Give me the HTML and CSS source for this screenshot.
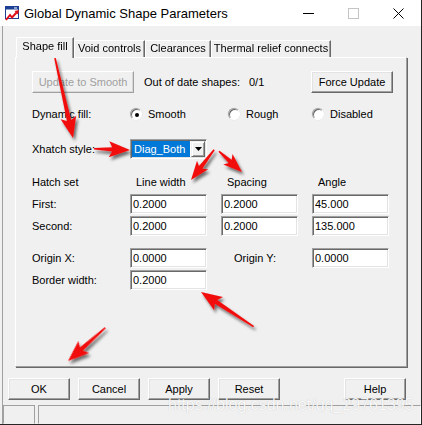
FILE: index.html
```html
<!DOCTYPE html>
<html>
<head>
<meta charset="utf-8">
<title>Global Dynamic Shape Parameters</title>
<link rel="stylesheet" href="styles.css">
</head>
<body>
<div class="window">
  <div class="titlebar">
    <svg class="app-icon" viewBox="0 0 16 16" width="16" height="16">
      <rect x="1.5" y="1.5" width="13" height="12" fill="#fff" stroke="#1c3f94"/>
      <rect x="1.5" y="1.5" width="13" height="3" fill="#1c3f94"/>
      <rect x="10" y="2.5" width="3" height="1" fill="#fff"/>
      <polyline points="2,15 6,10 8,12.5 13,7" fill="none" stroke="#e0101a" stroke-width="2"/>
      <polygon points="10.5,6 15,5 14,9.5" fill="#e0101a"/>
    </svg>
    <span class="title">Global Dynamic Shape Parameters</span>
    <div class="caption-btns">
      <span class="cap"><svg width="11" height="11" viewBox="0 0 11 11"><rect x="0" y="5" width="11" height="1" fill="#000"/></svg></span>
      <span class="cap"><svg width="11" height="11" viewBox="0 0 11 11"><rect x="0.5" y="0.5" width="10" height="10" fill="none" stroke="#c4c4c4"/></svg></span>
      <span class="cap"><svg width="11" height="11" viewBox="0 0 11 11"><path d="M0.5 0.5 L10.5 10.5 M10.5 0.5 L0.5 10.5" stroke="#000" stroke-width="1"/></svg></span>
    </div>
  </div>

  <div class="client">
    <div class="tabs">
      <div class="tab active w1">Shape fill</div>
      <div class="tab w2">Void controls</div>
      <div class="tab w3">Clearances</div>
      <div class="tab w4">Thermal relief connects</div>
    </div>

    <div class="panel">
      <div class="row r1">
        <button class="btn disabled w-update">Update to Smooth</button>
        <span class="ood">Out of date shapes:</span>
        <span class="count">0/1</span>
        <button class="btn w-force">Force Update</button>
      </div>

      <div class="row r2">
        <span class="label">Dynamic fill:</span>
        <span class="opt o1"><span class="radio checked"></span><span class="opt-text">Smooth</span></span>
        <span class="opt o2"><span class="radio"></span><span class="opt-text">Rough</span></span>
        <span class="opt o3"><span class="radio"></span><span class="opt-text">Disabled</span></span>
      </div>

      <div class="row r3">
        <span class="label">Xhatch style:</span>
        <div class="combo">
          <span class="combo-sel">Diag_Both</span>
          <span class="combo-btn"><svg width="7" height="4" viewBox="0 0 7 4"><polygon points="0,0 7,0 3.5,4" fill="#000"/></svg></span>
        </div>
      </div>

      <div class="row r4">
        <span class="label">Hatch set</span>
        <span class="head">Line width</span>
        <span class="gap"></span>
        <span class="head">Spacing</span>
        <span class="gap"></span>
        <span class="head">Angle</span>
      </div>

      <div class="row r5">
        <span class="label">First:</span>
        <input class="field" type="text" value="0.2000" readonly>
        <span class="gap"></span>
        <input class="field" type="text" value="0.2000" readonly>
        <span class="gap"></span>
        <input class="field" type="text" value="45.000" readonly>
      </div>

      <div class="row r6">
        <span class="label">Second:</span>
        <input class="field" type="text" value="0.2000" readonly>
        <span class="gap"></span>
        <input class="field" type="text" value="0.2000" readonly>
        <span class="gap"></span>
        <input class="field" type="text" value="135.000" readonly>
      </div>

      <div class="row r7">
        <span class="label">Origin X:</span>
        <input class="field" type="text" value="0.0000" readonly>
        <span class="gap"></span>
        <span class="oy">Origin Y:</span>
        <span class="gap"></span>
        <input class="field" type="text" value="0.0000" readonly>
      </div>

      <div class="row r8">
        <span class="label">Border width:</span>
        <input class="field" type="text" value="0.2000" readonly>
      </div>
    </div>

    <div class="btnrow">
      <button class="btn">OK</button>
      <button class="btn">Cancel</button>
      <button class="btn">Apply</button>
      <button class="btn">Reset</button>
      <button class="btn help">Help</button>
    </div>

    <div class="statusbar">
      <div class="cell c1"></div>
      <div class="cell c2"></div>
    </div>
  </div>
</div>

<div class="watermark">https://blog.csdn.net/qq_29761395</div>

<svg class="annotations" width="422" height="425" viewBox="0 0 422 425">
  <defs>
    <filter id="sh" x="-50%" y="-50%" width="200%" height="200%">
      <feDropShadow dx="2" dy="3" stdDeviation="1.8" flood-color="#000" flood-opacity="0.55"/>
    </filter>
  </defs>
  <g fill="#f20d0d" filter="url(#sh)">
    <g transform="translate(73 138) rotate(77.3)"><path d="M-82 -0.8 L-18 -2.2 L-21 -8 L0 0 L-21 8 L-18 2.2 L-82 0.8 Z"/></g>
    <g transform="translate(130 150) rotate(2)"><path d="M-36 -0.8 L-18 -2.2 L-21 -8 L0 0 L-21 8 L-18 2.2 L-36 0.8 Z"/></g>
    <g transform="translate(191 180) rotate(127.5)"><path d="M-38 -0.8 L-16 -2.2 L-19 -7 L0 0 L-19 7 L-16 2.2 L-38 0.8 Z"/></g>
    <g transform="translate(242 172) rotate(42)"><path d="M-31 -0.8 L-16 -2.2 L-19 -7 L0 0 L-19 7 L-16 2.2 L-31 0.8 Z"/></g>
    <g transform="translate(201 292) rotate(-146.6)"><path d="M-63 -0.8 L-18 -2.2 L-21 -8 L0 0 L-21 8 L-18 2.2 L-63 0.8 Z"/></g>
    <g transform="translate(68 361) rotate(138.3)"><path d="M-50 -0.8 L-18 -2.2 L-21 -8 L0 0 L-21 8 L-18 2.2 L-50 0.8 Z"/></g>
  </g>
</svg>
</body>
</html>
```

FILE: styles.css
```css
* { box-sizing: border-box; }

html, body { margin: 0; padding: 0; }

body {
  width: 422px;
  height: 425px;
  background: #262626;
  font-family: "Liberation Sans", Arial, sans-serif;
  font-size: 11px;
  color: #000;
  overflow: hidden;
  position: relative;
}

.window {
  width: 421px;
  height: 424px;
  background: #f0f0f0;
  display: flex;
  flex-direction: column;
}

/* Title bar */
.titlebar {
  height: 26px;
  flex-shrink: 0;
  background: #fff;
  display: flex;
  align-items: center;
}
.app-icon { margin-left: 4px; margin-right: 4px; flex-shrink: 0; }
.title { font-size: 13px; color: #000; }
.caption-btns { margin-left: auto; display: flex; }
.cap {
  width: 45px;
  height: 26px;
  display: flex;
  align-items: center;
  justify-content: center;
}

/* Client area */
.client {
  flex: 1;
  margin-left: 2px;
  border-left: 1px solid #a0a0a0;
  display: flex;
  flex-direction: column;
}

.tabs {
  display: flex;
  align-items: flex-end;
  height: 20px;
  margin: 11px 0 0 13px;
  position: relative;
  z-index: 1;
}
.tab {
  height: 17px;
  border: 1px solid #fff;
  border-right-color: #696969;
  border-bottom: 0;
  box-shadow: inset -1px 0 0 #a0a0a0;
  line-height: 14px;
  text-align: center;
  white-space: nowrap;
}
.tab.active {
  height: 21px;
  margin-bottom: -1px;
  background: #f0f0f0;
  padding-top: 1px;
}
.w1 { width: 58px; }
.w2 { width: 71px; }
.w3 { width: 66px; }
.w4 { width: 120px; }

.panel {
  margin-left: 12px;
  width: 392px;
  height: 310px;
  flex-shrink: 0;
  border: 1px solid;
  border-color: #fff #a0a0a0 #a0a0a0 #fff;
  box-shadow: 1px 1px 0 #696969;
  padding: 13px 0 0 16px;
}

.row { display: flex; align-items: center; }
.r1 { height: 22px; }
.r2 { height: 20px; margin-top: 11px; }
.r3 { height: 20px; margin-top: 15px; }
.r4 { height: 18px; margin-top: 14px; }
.r5 { height: 20px; margin-top: 3px; }
.r6 { height: 20px; margin-top: 2px; }
.r7 { height: 20px; margin-top: 12px; }
.r8 { height: 20px; margin-top: 2px; }

.label { width: 98px; flex-shrink: 0; white-space: nowrap; }
.gap { width: 14px; flex-shrink: 0; }
.head { width: 77px; padding-left: 6px; flex-shrink: 0; }
.oy { width: 77px; padding-left: 13px; flex-shrink: 0; }

/* Buttons */
.btn {
  font: inherit;
  color: #000;
  background: #f0f0f0;
  border: 1px solid;
  border-color: #fff #696969 #696969 #fff;
  box-shadow: inset -1px -1px 0 #a0a0a0, inset 1px 1px 0 #e3e3e3;
  padding: 0;
  width: 62px;
  height: 22px;
  flex-shrink: 0;
  white-space: nowrap;
}
.btn.disabled {
  color: #a0a0a0;
  border-color: #fff #a0a0a0 #a0a0a0 #fff;
  box-shadow: inset -1px -1px 0 #d8d8d8;
}
.w-update { width: 102px; }
.w-force { width: 82px; }
.ood { width: 105px; margin-left: 10px; white-space: nowrap; flex-shrink: 0; }
.count { width: 62px; flex-shrink: 0; }

/* Radios */
.opt { display: flex; align-items: center; flex-shrink: 0; }
.o1 { width: 98px; }
.o2 { width: 84px; }
.radio {
  width: 12px;
  height: 12px;
  border-radius: 50%;
  background: #fff;
  border: 1px solid;
  border-color: #a0a0a0 #fff #fff #a0a0a0;
  box-shadow: inset 1px 1px 0 #696969, 0 0 0 0.5px #e3e3e3;
  display: flex;
  align-items: center;
  justify-content: center;
  flex-shrink: 0;
}
.radio.checked::after {
  content: "";
  width: 4px;
  height: 4px;
  border-radius: 50%;
  background: #000;
  margin: 1px 0 0 1px;
}
.opt-text { margin-left: 6px; }

/* Combo */
.combo {
  width: 77px;
  height: 20px;
  background: #fff;
  border: 1px solid;
  border-color: #a0a0a0 #fff #fff #a0a0a0;
  box-shadow: inset 1px 1px 0 #696969, inset -1px -1px 0 #e3e3e3;
  padding: 1px;
  display: flex;
}
.combo-sel {
  flex: 1;
  background: #0078d7;
  color: #fff;
  padding-left: 2px;
  line-height: 16px;
  white-space: nowrap;
}
.combo-btn {
  width: 14px;
  margin-left: 1px;
  background: #f0f0f0;
  border: 1px solid;
  border-color: #f0f0f0 #696969 #696969 #f0f0f0;
  box-shadow: inset 1px 1px 0 #fff, inset -1px -1px 0 #a0a0a0;
  display: flex;
  align-items: center;
  justify-content: center;
}

/* Text fields */
.field {
  font: inherit;
  color: #000;
  width: 77px;
  height: 20px;
  flex-shrink: 0;
  background: #fff;
  border: 1px solid;
  border-color: #a0a0a0 #fff #fff #a0a0a0;
  box-shadow: inset 1px 1px 0 #696969, inset -1px -1px 0 #e3e3e3;
  padding: 0 0 0 2px;
  margin: 0;
  outline: none;
}

/* Bottom button row */
.btnrow {
  display: flex;
  gap: 8px;
  margin: 11px 0 0 5px;
}
.btn.help { margin-left: 56px; }

/* Status bar */
.statusbar {
  margin-top: 5px;
  height: 19px;
  display: flex;
  gap: 3px;
}
.cell {
  height: 19px;
  border: 1px solid;
  border-color: #a0a0a0 #fff #f0f0f0 #a0a0a0;
}
.c1 { width: 32px; border-right-color: #a0a0a0; }
.c2 { flex: 1; }

/* Overlays */
.watermark {
  position: absolute;
  left: 168px;
  top: 397px;
  font-size: 16px;
  line-height: 16px;
  color: rgba(255, 255, 255, 0.92);
  text-shadow: 0 0 1px rgba(0, 0, 0, 0.22);
  white-space: nowrap;
}
.annotations {
  position: absolute;
  left: 0;
  top: 0;
  pointer-events: none;
}
```
